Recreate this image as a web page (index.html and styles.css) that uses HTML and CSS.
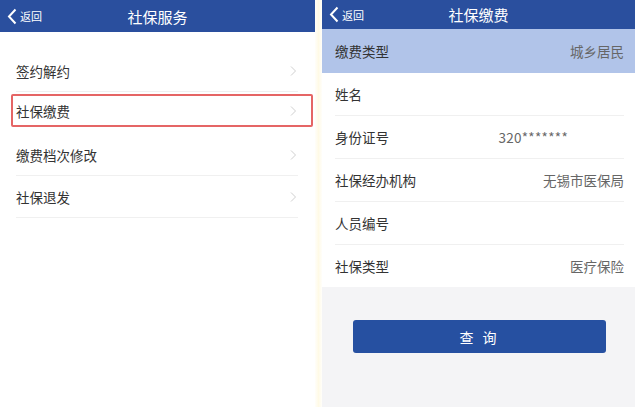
FILE: index.html
```html
<!DOCTYPE html>
<html lang="zh-CN">
<head>
  <meta charset="UTF-8">
  <meta name="viewport" content="width=device-width, initial-scale=1.0">
  <title>社保服务</title>
  <link rel="stylesheet" href="styles.css">
</head>
<body>

  <!-- 左：社保服务菜单 -->
  <div class="screen screen-menu">
    <div class="nav-bar">
      <a class="back" href="#">
        <svg class="back-icon" width="10" height="17" viewBox="0 0 10 17"><polyline points="8.5,1.5 2,8.5 8.5,15.5" fill="none" stroke="#fff" stroke-width="2"/></svg>
        <span>返回</span>
      </a>
      <div class="nav-title">社保服务</div>
    </div>

    <ul class="menu-list">
      <li class="menu-item"><span>签约解约</span><svg class="arrow" width="6" height="10" viewBox="0 0 6 10"><polyline points="1,0.5 5.5,5 1,9.5" fill="none" stroke="#cfcfcf" stroke-width="1"/></svg></li>
      <li class="menu-item active"><span>社保缴费</span><svg class="arrow" width="6" height="10" viewBox="0 0 6 10"><polyline points="1,0.5 5.5,5 1,9.5" fill="none" stroke="#cfcfcf" stroke-width="1"/></svg></li>
      <li class="menu-item"><span>缴费档次修改</span><svg class="arrow" width="6" height="10" viewBox="0 0 6 10"><polyline points="1,0.5 5.5,5 1,9.5" fill="none" stroke="#cfcfcf" stroke-width="1"/></svg></li>
      <li class="menu-item"><span>社保退发</span><svg class="arrow" width="6" height="10" viewBox="0 0 6 10"><polyline points="1,0.5 5.5,5 1,9.5" fill="none" stroke="#cfcfcf" stroke-width="1"/></svg></li>
    </ul>
  </div>

  <div class="divider"></div>

  <!-- 右：社保缴费 -->
  <div class="screen screen-pay">
    <div class="nav-bar nav-bar-short">
      <a class="back" href="#">
        <svg class="back-icon" width="10" height="17" viewBox="0 0 10 17"><polyline points="8.5,1.5 2,8.5 8.5,15.5" fill="none" stroke="#fff" stroke-width="2"/></svg>
        <span>返回</span>
      </a>
      <div class="nav-title">社保缴费</div>
    </div>

    <div class="info-list">
      <div class="info-row highlight"><span class="label">缴费类型</span><span class="value">城乡居民</span></div>
      <div class="info-row"><span class="label">姓名</span><span class="value"></span></div>
      <div class="info-row"><span class="label">身份证号</span><span class="value id-no">320*******</span></div>
      <div class="info-row"><span class="label">社保经办机构</span><span class="value">无锡市医保局</span></div>
      <div class="info-row"><span class="label">人员编号</span><span class="value"></span></div>
      <div class="info-row"><span class="label">社保类型</span><span class="value">医疗保险</span></div>
    </div>

    <div class="button-area">
      <button class="query-btn">查 询</button>
    </div>
  </div>

</body>
</html>
```

FILE: styles.css
```css
/* === 页面基础 === */
body {
  margin: 0;
  display: flex;
  height: 407px;
  background: #fff;
  font-family: "Noto Sans CJK SC", "Noto Sans", sans-serif;
  color: #333;
  overflow: hidden;
}
.screen {
  display: flex;
  flex-direction: column;
}
.screen-menu {
  width: 315px;
  background: #fff;
}
.divider {
  width: 7px;
  background: linear-gradient(to right, #fffefa, #fffae6 50%, #fffefa);
}
.screen-pay {
  flex: 1;
  background: #f4f4f6;
}

/* === 顶部导航 === */
.nav-bar {
  height: 32px;
  background: #2a4f9e;
  display: flex;
  align-items: center;
  position: relative;
  flex-shrink: 0;
}
.nav-bar-short {
  height: 29px;
}
.back {
  display: flex;
  align-items: center;
  gap: 3px;
  padding-left: 7px;
  color: #fff;
  font-size: 11px;
  text-decoration: none;
  z-index: 1;
}
.nav-title {
  position: absolute;
  left: 0;
  right: 0;
  text-align: center;
  color: #fff;
  font-size: 15px;
}

/* === 左侧菜单 === */
.menu-list {
  list-style: none;
  margin: 18px 0 0;
  padding: 0 17px 0 16px;
}
.menu-item {
  height: 42px;
  box-sizing: border-box;
  border-bottom: 1px solid #f0f0f0;
  display: flex;
  align-items: center;
  justify-content: space-between;
  font-size: 13.5px;
  padding-right: 2px;
}
.menu-item.active {
  height: 33px;
  margin: 2px -15px 7px -5px;
  padding: 0 15px 0 3px;
  border: 2px solid #e56565;
  border-radius: 2px;
}

/* === 右侧信息 === */
.info-list {
  background: #fff;
  padding: 0 11px 0 13px;
}
.info-row {
  height: 43px;
  box-sizing: border-box;
  display: flex;
  align-items: center;
  justify-content: space-between;
  font-size: 13.5px;
  border-bottom: 1px solid #f0f0f0;
}
.info-row:last-child {
  border-bottom: none;
  height: 42px;
}
.info-row.highlight {
  height: 44px;
  margin: 0 -11px 0 -13px;
  padding: 0 11px 0 13px;
  background: #b1c4e9;
  border-bottom: none;
}
.info-row .value {
  color: #666;
}
.info-row .id-no {
  padding-right: 56px;
  letter-spacing: 0.3px;
}

/* === 查询按钮 === */
.button-area {
  padding: 33px 29px 0 31px;
}
.query-btn {
  width: 100%;
  height: 33px;
  border: none;
  border-radius: 3px;
  background: #2650a1;
  color: #fff;
  font-family: inherit;
  font-size: 14px;
  letter-spacing: 3px;
}
```
